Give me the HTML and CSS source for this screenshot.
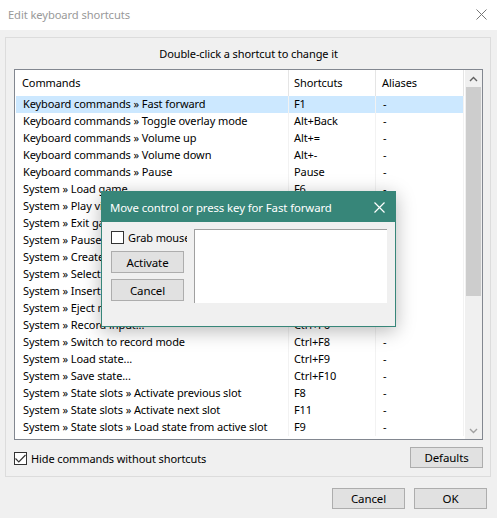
FILE: index.html
```html
<!DOCTYPE html>
<html lang="en">
<head>
    <meta charset="UTF-8">
    <title>Edit keyboard shortcuts</title>
    <link rel="stylesheet" href="styles.css">
</head>
<body>

    <div class="window">
        <!-- Title bar -->
        <div class="titlebar">
            <span class="title">Edit keyboard shortcuts</span>
            <svg class="close" width="11" height="11" viewBox="0 0 11 11">
                <path d="M0.5 0.5 L10.5 10.5 M10.5 0.5 L0.5 10.5" stroke="#767676" stroke-width="1" fill="none"/>
            </svg>
        </div>

        <div class="client">
            <div class="frame">
                <p class="hint">Double-click a shortcut to change it</p>

                <!-- Shortcut list -->
                <div class="list">
                    <div class="table">
                        <div class="row header">
                            <div class="cell">Commands</div>
                            <div class="cell">Shortcuts</div>
                            <div class="cell">Aliases</div>
                        </div>
                        <div class="row selected"><div class="cell">Keyboard commands » Fast forward</div><div class="cell">F1</div><div class="cell">-</div></div>
                        <div class="row"><div class="cell">Keyboard commands » Toggle overlay mode</div><div class="cell">Alt+Back</div><div class="cell">-</div></div>
                        <div class="row"><div class="cell">Keyboard commands » Volume up</div><div class="cell">Alt+=</div><div class="cell">-</div></div>
                        <div class="row"><div class="cell">Keyboard commands » Volume down</div><div class="cell">Alt+-</div><div class="cell">-</div></div>
                        <div class="row"><div class="cell">Keyboard commands » Pause</div><div class="cell">Pause</div><div class="cell">-</div></div>
                        <div class="row"><div class="cell">System » Load game</div><div class="cell">F6</div><div class="cell">-</div></div>
                        <div class="row"><div class="cell">System » Play video</div><div class="cell">Ctrl+F7</div><div class="cell">-</div></div>
                        <div class="row"><div class="cell">System » Exit game</div><div class="cell">Ctrl+Q</div><div class="cell">-</div></div>
                        <div class="row"><div class="cell">System » Pause</div><div class="cell">Ctrl+P</div><div class="cell">-</div></div>
                        <div class="row"><div class="cell">System » Create screenshot</div><div class="cell">F12</div><div class="cell">-</div></div>
                        <div class="row"><div class="cell">System » Select disk</div><div class="cell">Ctrl+F2</div><div class="cell">-</div></div>
                        <div class="row"><div class="cell">System » Insert disk</div><div class="cell">Ctrl+F3</div><div class="cell">-</div></div>
                        <div class="row"><div class="cell">System » Eject media</div><div class="cell">Ctrl+F4</div><div class="cell">-</div></div>
                        <div class="row"><div class="cell">System » Record input...</div><div class="cell">Ctrl+F6</div><div class="cell">-</div></div>
                        <div class="row"><div class="cell">System » Switch to record mode</div><div class="cell">Ctrl+F8</div><div class="cell">-</div></div>
                        <div class="row"><div class="cell">System » Load state...</div><div class="cell">Ctrl+F9</div><div class="cell">-</div></div>
                        <div class="row"><div class="cell">System » Save state...</div><div class="cell">Ctrl+F10</div><div class="cell">-</div></div>
                        <div class="row"><div class="cell">System » State slots » Activate previous slot</div><div class="cell">F8</div><div class="cell">-</div></div>
                        <div class="row"><div class="cell">System » State slots » Activate next slot</div><div class="cell">F11</div><div class="cell">-</div></div>
                        <div class="row"><div class="cell">System » State slots » Load state from active slot</div><div class="cell">F9</div><div class="cell">-</div></div>
                    </div>

                    <!-- Scrollbar -->
                    <div class="scrollbar">
                        <div class="arrow">
                            <svg width="9" height="6" viewBox="0 0 9 6"><path d="M1 5 L4.5 1.5 L8 5" stroke="#606060" stroke-width="1.4" fill="none"/></svg>
                        </div>
                        <div class="track"><div class="thumb"></div></div>
                        <div class="arrow">
                            <svg width="9" height="6" viewBox="0 0 9 6"><path d="M1 1 L4.5 4.5 L8 1" stroke="#a0a0a0" stroke-width="1.4" fill="none"/></svg>
                        </div>
                    </div>
                </div>

                <div class="options">
                    <label class="check">
                        <span class="box">
                            <svg width="11" height="9" viewBox="0 0 11 9"><path d="M0.5 4.5 L3.8 7.8 L10.5 1" stroke="#333" stroke-width="1.2" fill="none"/></svg>
                        </span>
                        Hide commands without shortcuts
                    </label>
                    <button class="btn">Defaults</button>
                </div>
            </div>

            <div class="footer">
                <button class="btn">Cancel</button>
                <button class="btn">OK</button>
            </div>
        </div>

        <!-- Key capture dialog -->
        <div class="dialog">
            <div class="dialog-title">
                <span>Move control or press key for Fast forward</span>
                <svg width="11" height="11" viewBox="0 0 11 11">
                    <path d="M0.5 0.5 L10.5 10.5 M10.5 0.5 L0.5 10.5" stroke="#fff" stroke-width="1.2" fill="none"/>
                </svg>
            </div>
            <div class="dialog-body">
                <div class="dialog-side">
                    <label class="check grab"><span class="box"></span>Grab mouse</label>
                    <button class="btn">Activate</button>
                    <button class="btn">Cancel</button>
                </div>
                <div class="capture"></div>
            </div>
        </div>
    </div>

</body>
</html>
```

FILE: styles.css
```css
/* General */
body {
    margin: 0;
    font-family: "Noto Sans", sans-serif;
    font-size: 11px;
    letter-spacing: -0.1px;
    color: #000;
}

.window {
    position: relative;
    width: 497px;
    height: 518px;
    background: #f0f0f0;
    overflow: hidden;
}

/* Title bar */
.titlebar {
    height: 30px;
    background: #fff;
    display: flex;
    align-items: center;
    justify-content: space-between;
    padding: 0 10px 1px 8px;
    box-sizing: border-box;
}

.title {
    color: #999;
    font-size: 11.2px;
}

/* Client area */
.client {
    padding: 7px 6px 0 5px;
}

.frame {
    height: 438px;
    border: 1px solid #dcdcdc;
    padding: 0 7px 0 8px;
}

.hint {
    margin: 0;
    height: 31px;
    line-height: 31px;
    text-align: center;
}

/* List */
.list {
    display: flex;
    height: 369px;
    border: 1px solid #828790;
    background: #fff;
}

.table {
    width: 449px;
}

.row {
    display: grid;
    grid-template-columns: 273px 87px 88px;
    height: 17px;
    line-height: 16px;
    margin-left: 1px;
}

.cell {
    padding-left: 7px;
    white-space: nowrap;
    overflow: hidden;
    border-right: 1px solid #f2f2f2;
}

.header {
    height: 26px;
    line-height: 25px;
}

.header .cell {
    padding-left: 6px;
    border-right: 1px solid #e5e5e5;
}

.header .cell:nth-child(2),
.row .cell:nth-child(2) {
    padding-left: 5px;
}

.header .cell:nth-child(3) {
    padding-left: 6px;
}

.selected {
    background: #cce8ff;
}

/* Scrollbar */
.scrollbar {
    width: 17px;
    margin-left: 1px;
    background: #f0f0f0;
    display: flex;
    flex-direction: column;
}

.arrow {
    height: 17px;
    display: flex;
    align-items: center;
    justify-content: center;
}

.track {
    flex: 1;
}

.thumb {
    height: 209px;
    margin: 0 1px;
    background: #cdcdcd;
}

/* Options row */
.options {
    display: flex;
    justify-content: space-between;
    align-items: center;
    margin-top: 7px;
}

.check {
    display: flex;
    align-items: center;
    gap: 4px;
    margin-top: 2px;
}

.box {
    width: 11px;
    height: 11px;
    border: 1px solid #333;
    background: #fff;
    display: flex;
    align-items: center;
    justify-content: center;
}

/* Buttons */
.btn {
    width: 73px;
    height: 21px;
    padding: 0;
    background: #e1e1e1;
    border: 1px solid #adadad;
    font-family: inherit;
    font-size: 11.5px;
    letter-spacing: -0.1px;
    color: #000;
}

.footer {
    display: flex;
    justify-content: flex-end;
    gap: 9px;
    margin-top: 11px;
    padding-right: 4px;
}

/* Dialog */
.dialog {
    position: absolute;
    left: 101px;
    top: 191px;
    width: 293px;
    height: 134px;
    border: 1px solid #378679;
    background: #f0f0f0;
    box-shadow: 0 4px 18px rgba(0, 0, 0, 0.28);
}

.dialog-title {
    height: 30px;
    background: #378679;
    color: #fff;
    font-size: 11.4px;
    display: flex;
    align-items: center;
    justify-content: space-between;
    padding: 0 10px 0 8px;
}

.dialog-body {
    display: flex;
    gap: 7px;
    padding: 7px 8px 0 9px;
}

.dialog-side {
    width: 76px;
    display: flex;
    flex-direction: column;
    gap: 6px;
}

.grab {
    width: 76px;
    overflow: hidden;
    white-space: nowrap;
    margin-top: 1px;
}

.grab .box {
    flex: none;
}

.dialog-side .btn {
    width: 73px;
    height: 22px;
}

.capture {
    width: 193px;
    height: 73px;
    background: #fff;
    border-top: 1px solid #a0a0a0;
    border-left: 1px solid #a0a0a0;
}
```
